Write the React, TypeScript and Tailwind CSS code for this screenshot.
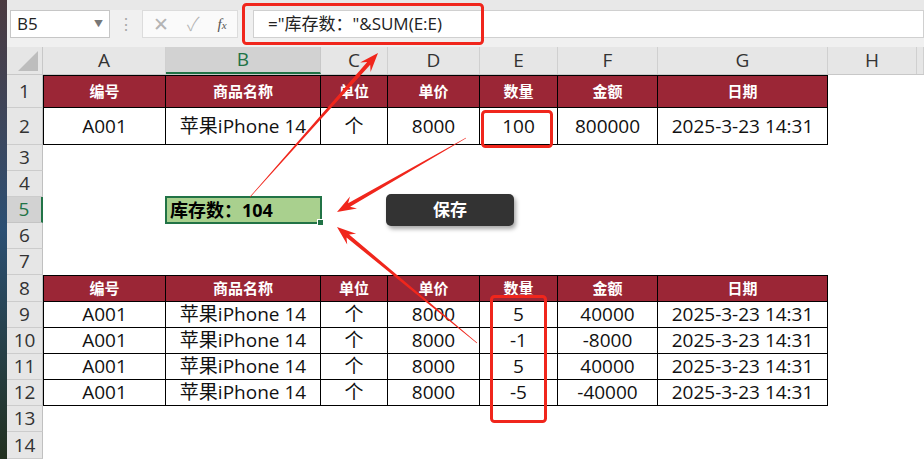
import React from 'react';

const FONT = { fontFamily: '"Open Sans", "Noto Sans CJK SC", sans-serif' };

const cols = [
  { key: 'A', w: 'w-[123px]' },
  { key: 'B', w: 'w-[155px]' },
  { key: 'C', w: 'w-[67px]' },
  { key: 'D', w: 'w-[92px]' },
  { key: 'E', w: 'w-[78px]' },
  { key: 'F', w: 'w-[100px]' },
  { key: 'G', w: 'w-[170px]' },
  { key: 'H', w: 'w-[89px]' },
  { key: '', w: 'w-[7px]' },
];

const header = ['编号', '商品名称', '单位', '单价', '数量', '金额', '日期'];

const data: Record<number, string[]> = {
  2: ['A001', '苹果iPhone 14', '个', '8000', '100', '800000', '2025-3-23 14:31'],
  9: ['A001', '苹果iPhone 14', '个', '8000', '5', '40000', '2025-3-23 14:31'],
  10: ['A001', '苹果iPhone 14', '个', '8000', '-1', '-8000', '2025-3-23 14:31'],
  11: ['A001', '苹果iPhone 14', '个', '8000', '5', '40000', '2025-3-23 14:31'],
  12: ['A001', '苹果iPhone 14', '个', '8000', '-5', '-40000', '2025-3-23 14:31'],
};

const rows = [
  { n: 1, h: 'h-[33px]' },
  { n: 2, h: 'h-[37px]' },
  { n: 3, h: 'h-[26px]' },
  { n: 4, h: 'h-[26px]' },
  { n: 5, h: 'h-[26px]' },
  { n: 6, h: 'h-[26px]' },
  { n: 7, h: 'h-[26px]' },
  { n: 8, h: 'h-[27px]' },
  { n: 9, h: 'h-[26px]' },
  { n: 10, h: 'h-[26px]' },
  { n: 11, h: 'h-[26px]' },
  { n: 12, h: 'h-[26px]' },
  { n: 13, h: 'h-[26px]' },
  { n: 14, h: 'h-[27px]' },
];

function arrowPoints(x1: number, y1: number, x2: number, y2: number) {
  const dx = x2 - x1;
  const dy = y2 - y1;
  const len = Math.hypot(dx, dy);
  const ux = dx / len;
  const uy = dy / len;
  const nx = -uy;
  const ny = ux;
  const hl = 19;
  const hw = 7;
  const neck = 14;
  const w0 = 0.3;
  const w1 = 2;
  const bx = x2 - ux * hl;
  const by = y2 - uy * hl;
  const kx = x2 - ux * neck;
  const ky = y2 - uy * neck;
  const pts = [
    [x1 + nx * w0, y1 + ny * w0],
    [kx + nx * w1, ky + ny * w1],
    [bx + nx * hw, by + ny * hw],
    [x2, y2],
    [bx - nx * hw, by - ny * hw],
    [kx - nx * w1, ky - ny * w1],
    [x1 - nx * w0, y1 - ny * w0],
  ];
  return pts.map((p) => `${p[0].toFixed(1)},${p[1].toFixed(1)}`).join(' ');
}

const Annotations = () => (
  <svg className="absolute inset-0 pointer-events-none" width="924" height="459" viewBox="0 0 924 459">
    <g fill="none" stroke="#f0261c" strokeWidth="3">
      <rect x="243.5" y="4.5" width="239" height="39" rx="3" />
      <rect x="482.5" y="111.5" width="69" height="35" rx="3" />
      <rect x="491.5" y="296.5" width="54" height="125" rx="3" />
    </g>
    <g fill="#f0261c">
      <polygon points={arrowPoints(250, 197, 378, 53)} />
      <polygon points={arrowPoints(466, 138, 337, 212)} />
      <polygon points={arrowPoints(477, 343, 337, 227)} />
    </g>
  </svg>
);

const FormulaBar = () => (
  <div className="h-[47px] bg-[#f0f0f0] flex flex-col">
    <div className="h-[10px] bg-[#e8e8e8]" />
    <div className="flex items-start">
      <div className="ml-[3px] w-[100px] h-[28px] bg-white border border-[#c6c6c6] flex items-center justify-between pl-[6px] pr-[6px]">
        <span className="text-[17px] text-[#222]">B5</span>
        <span className="text-[9px] text-[#777]">▼</span>
      </div>
      <div className="w-[32px] h-[28px] flex items-center justify-center text-[#a8a8a8] text-[16px]">⋮</div>
      <div className="w-[96px] h-[28px] bg-[#fafafa] border border-[#dcdcdc] flex items-center pl-[10px] gap-[18px]">
        <span className="text-[19px] text-[#b4b4b4] leading-none font-light">✕</span>
        <span className="text-[19px] text-[#b4b4b4] leading-none font-light">✓</span>
        <span className="text-[15px] text-[#555] italic leading-none" style={{ fontFamily: '"Liberation Serif", serif' }}>
          f<span className="text-[11px]">x</span>
        </span>
      </div>
      <div className="ml-[15px] flex-1 h-[28px] bg-white border border-[#d0d0d0] flex items-center pl-[14px]">
        <span className="text-[17px] text-[#222]">="库存数："&amp;SUM(E:E)</span>
      </div>
    </div>
  </div>
);

const ColumnHeader = () => (
  <div className="h-[28px] flex bg-[#e6e6e6] border-b border-[#c8c8c8]">
    <div className="w-[36px] relative border-r border-[#c8c8c8]">
      <div className="absolute right-[4px] bottom-[3px] w-0 h-0 border-l-[20px] border-l-transparent border-b-[20px] border-b-[#bdbdbd]" />
    </div>
    {cols.map((c) =>
      c.key === 'B' ? (
        <div
          key={c.key}
          className={`${c.w} flex items-center justify-center bg-[#d2d2d2] border-r border-[#c8c8c8] border-b-2 border-b-[#217346] text-[19px] text-[#217346]`}
        >
          {c.key}
        </div>
      ) : (
        <div key={c.key || 'x'} className={`${c.w} flex items-center justify-center border-r border-[#d0d0d0] text-[19px] text-[#333]`}>
          {c.key}
        </div>
      )
    )}
  </div>
);

const RowHeader = ({ n }: { n: number }) =>
  n === 5 ? (
    <div className="w-[36px] shrink-0 flex items-center justify-center bg-[#d2d2d2] border-b border-[#c4c4c4] border-r-2 border-r-[#217346] text-[19px] text-[#217346]">
      {n}
    </div>
  ) : (
    <div className="w-[36px] shrink-0 flex items-center justify-center bg-[#e6e6e6] border-b border-[#cccccc] border-r border-r-[#c0c0c0] text-[19px] text-[#333]">
      {n}
    </div>
  );

const SheetRow = ({ n, h }: { n: number; h: string }) => {
  const isHead = n === 1 || n === 8;
  const vals = data[n];
  return (
    <div className={`${h} flex`}>
      <RowHeader n={n} />
      {cols.map((c, i) => {
        if (i < 7 && isHead) {
          return (
            <div
              key={i}
              className={`${c.w} shrink-0 flex items-center justify-center bg-[#9b2636] border-t border-b border-r border-black ${i === 0 ? 'border-l' : ''} text-white font-bold text-[15px]`}
            >
              {header[i]}
            </div>
          );
        }
        if (i < 7 && vals) {
          return (
            <div
              key={i}
              className={`${c.w} shrink-0 flex items-center justify-center bg-white border-b border-r border-black ${i === 0 ? 'border-l' : ''} text-[19px] text-[#111]`}
            >
              {vals[i]}
            </div>
          );
        }
        if (n === 5 && i === 1) {
          return (
            <div key={i} className={`${c.w} shrink-0 relative bg-[#a9d08e] flex items-center pl-[4px]`}>
              <div className="absolute -inset-[1px] border-2 border-[#217346]" />
              <div className="absolute -right-[3px] -bottom-[3px] w-[7px] h-[7px] bg-[#217346] border border-white" />
              <span className="text-[18px] font-bold text-black">库存数：104</span>
            </div>
          );
        }
        return <div key={i} className={`${c.w} shrink-0 bg-white`} />;
      })}
    </div>
  );
};

export default function App() {
  return (
    <div className="relative w-[924px] h-[459px] overflow-hidden flex bg-white" style={FONT}>
      <div className="w-[7px] shrink-0 bg-gradient-to-b from-[#4a3a40] via-[#2b4f73] to-[#22301f]" />
      <div className="flex-1 flex flex-col">
        <FormulaBar />
        <ColumnHeader />
        {rows.map((r) => (
          <SheetRow key={r.n} n={r.n} h={r.h} />
        ))}
      </div>
      <div className="absolute left-[386px] top-[194px] w-[128px] h-[32px] rounded-[5px] bg-[#333333] shadow-[2px_3px_4px_rgba(0,0,0,0.35)] flex items-center justify-center">
        <span className="text-white font-bold text-[17px]">保存</span>
      </div>
      <Annotations />
    </div>
  );
}
